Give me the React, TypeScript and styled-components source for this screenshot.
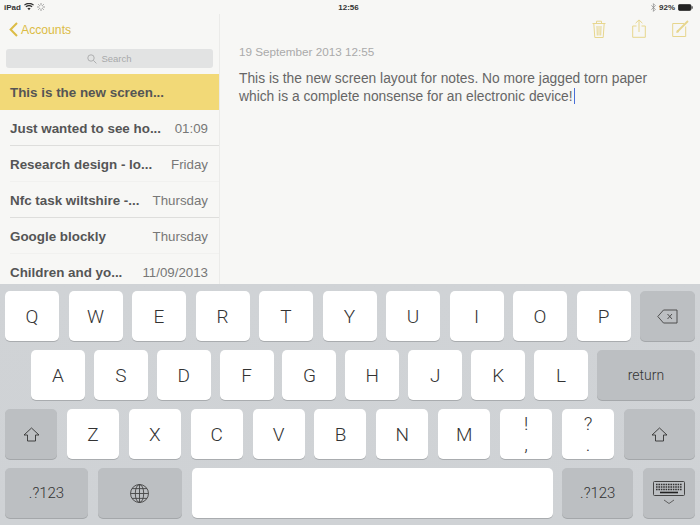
import React from "react";
import styled, { createGlobalStyle } from "styled-components";

const Global = createGlobalStyle`
  html, body { margin: 0; padding: 0; background: #f7f7f5; }
  #root { width: 700px; height: 525px; overflow: hidden; }
`;

const SANS = `"Liberation Sans", Arial, sans-serif`;
const LIGHT = `Roboto, "Liberation Sans", sans-serif`;
const YELLOW = "#dcbc45";
const ICON = "#e7d68d";

const Screen = styled.div`
  width: 700px;
  height: 525px;
  display: flex;
  flex-direction: column;
  background: #f7f7f5;
  font-family: ${SANS};
`;

const StatusBar = styled.div`
  height: 14px;
  flex: none;
  display: grid;
  grid-template-columns: 1fr auto 1fr;
  align-items: center;
  padding: 0 7px 0 4px;
  font-size: 8px;
  font-weight: 700;
  color: #333;
`;

const StatusSide = styled.div<{ $end?: boolean }>`
  display: flex;
  align-items: center;
  gap: 3px;
  justify-content: ${(p) => (p.$end ? "flex-end" : "flex-start")};
`;

const Main = styled.div`
  height: 270px;
  flex: none;
  display: flex;
  overflow: hidden;
`;

const Sidebar = styled.aside`
  width: 219px;
  flex: none;
  border-right: 1px solid #ebebe9;
  display: flex;
  flex-direction: column;
`;

const NavBar = styled.div`
  height: 35px;
  flex: none;
  display: flex;
  align-items: center;
  gap: 3px;
  padding: 0 0 4px 9px;
  box-sizing: border-box;
  font-size: 12.2px;
  color: ${YELLOW};
`;

const SearchWrap = styled.div`
  height: 25px;
  flex: none;
  padding: 0 6px;
`;

const SearchField = styled.div`
  height: 19px;
  background: #e2e3e3;
  border-radius: 3px;
  display: flex;
  align-items: center;
  justify-content: center;
  gap: 4px;
  font-size: 9.5px;
  color: #a8a9aa;
`;

const NoteRow = styled.div<{ $selected?: boolean }>`
  height: 36px;
  flex: none;
  display: flex;
  align-items: center;
  justify-content: space-between;
  box-sizing: border-box;
  padding: 0 11px 0 10px;
  background: ${(p) => (p.$selected ? "#f2d977" : "transparent")};
`;

const Divider = styled.div<{ $strong?: boolean }>`
  height: 1px;
  flex: none;
  margin: -1px 0 0 10px;
  background: ${(p) => (p.$strong ? "#dededc" : "#f1f1ef")};
`;

const NoteTitle = styled.span`
  font-size: 13.4px;
  font-weight: 700;
  color: #555;
  white-space: nowrap;
`;

const NoteDate = styled.span`
  font-size: 13.3px;
  color: #777;
  white-space: nowrap;
`;

const Detail = styled.section`
  flex: 1;
  display: flex;
  flex-direction: column;
`;

const Toolbar = styled.div`
  height: 29px;
  flex: none;
  display: flex;
  justify-content: flex-end;
  align-items: center;
  gap: 26px;
  padding: 0 11px 0 0;
`;

const NoteBody = styled.div`
  padding: 0 19px;
  margin-top: 2px;
`;

const Stamp = styled.div`
  font-size: 11.7px;
  line-height: 14px;
  color: #aaa;
`;

const NoteText = styled.p`
  margin: 11px 0 0;
  font-size: 13.8px;
  line-height: 17.5px;
  color: #666;
  white-space: pre-line;
`;

const Caret = styled.span`
  display: inline-block;
  width: 1px;
  height: 16px;
  margin-left: 1px;
  vertical-align: -3px;
  background: #4a6fd8;
`;

const Keyboard = styled.div`
  flex: 1;
  display: flex;
  flex-direction: column;
  gap: 9px;
  padding: 7px 5px 0;
  background: linear-gradient(#d0d3d6, #cfd2d5);
`;

const KeyRow = styled.div`
  display: flex;
  height: 50px;
  justify-content: space-between;
`;

const KeySpacer = styled.div`
  width: 17px;
  flex: none;
`;

const Key = styled.div<{ $w: number; $dark?: boolean; $size?: number }>`
  width: ${(p) => p.$w}px;
  flex: none;
  box-sizing: border-box;
  border-radius: 5px;
  display: flex;
  flex-direction: column;
  align-items: center;
  justify-content: center;
  background: ${(p) => (p.$dark ? "#bcbfc2" : "#ffffff")};
  box-shadow: 0 1px 0 ${(p) => (p.$dark ? "#a4a7aa" : "#a9acaf")};
  color: #333;
  font-family: ${LIGHT};
  font-weight: 300;
  font-size: ${(p) => p.$size ?? 19}px;
`;

const Punct = styled.span`
  line-height: 21px;
  font-size: 19px;
`;

const Wifi = () => (
  <svg width="10" height="8" viewBox="0 0 11 8">
    <path d="M5.5 7.6 3.7 5.5a2.8 2.8 0 0 1 3.6 0zM2.7 4.4 1.6 3.2a6 6 0 0 1 7.8 0L8.3 4.4a4.3 4.3 0 0 0-5.6 0zM.9 2.4 0 1.4a8.3 8.3 0 0 1 11 0l-.9 1a7 7 0 0 0-9.2 0z" fill="#333" />
  </svg>
);

const Spinner = () => (
  <svg width="8" height="8" viewBox="0 0 8 8" stroke="#8a8a8a" strokeWidth=".8">
    <path d="M4 0v2.4M4 5.6V8M0 4h2.4M5.6 4H8M1.2 1.2l1.6 1.6M5.2 5.2l1.6 1.6M1.2 6.8l1.6-1.6M5.2 2.8l1.6-1.6" />
  </svg>
);

const Bluetooth = () => (
  <svg width="5" height="9" viewBox="0 0 5 9" fill="none" stroke="#888" strokeWidth=".7">
    <path d="M.3 2.4 4.4 6.3 2.4 8.4V.6l2 2.1L.3 6.6" />
  </svg>
);

const Battery = () => (
  <svg width="15" height="7" viewBox="0 0 16 7">
    <rect x=".4" y=".4" width="13.4" height="6.2" rx="1.2" fill="#222" stroke="#222" strokeWidth=".8" />
    <rect x="14.3" y="2.2" width="1.4" height="2.6" fill="#444" />
  </svg>
);

const Chevron = () => (
  <svg width="9" height="15" viewBox="0 0 9 15" fill="none" stroke={YELLOW} strokeWidth="2">
    <path d="M8 1 1.6 7.5 8 14" />
  </svg>
);

const SearchIcon = () => (
  <svg width="10" height="10" viewBox="0 0 10 10" fill="none" stroke="#a8a9aa" strokeWidth=".9">
    <circle cx="4" cy="4" r="3.2" />
    <path d="m6.4 6.4 3 3" />
  </svg>
);

const Trash = () => (
  <svg width="14" height="18" viewBox="0 0 14 18" fill="none" stroke={ICON} strokeWidth="1">
    <path d="M.5 3.5h13M4.5 3.5V1.2h5v2.3M1.8 3.5l1 14h8.4l1-14M5 6l.3 9.5M7 6v9.5M9 6l-.3 9.5" />
  </svg>
);

const Share = () => (
  <svg width="14" height="19" viewBox="0 0 14 19" fill="none" stroke={ICON} strokeWidth="1">
    <path d="M4.5 7H.7v11.3h12.6V7H9.5M7 13V1M3.6 4.2 7 .9l3.4 3.3" />
  </svg>
);

const Compose = () => (
  <svg width="17" height="17" viewBox="0 0 17 17" fill="none" stroke={ICON} strokeWidth="1">
    <path d="M12 3.5H.7v13h13V6.5" />
    <path d="M5.5 11.5 16 1" strokeWidth="1.8" />
    <path d="m4.7 12.4.6-2 1.4 1.4z" fill={ICON} />
  </svg>
);

const Backspace = () => (
  <svg width="21" height="15" viewBox="0 0 21 15" fill="none" stroke="#444" strokeWidth=".9">
    <path d="M6.5 1H20v13H6.5L.8 7.5z" />
    <path d="m10.5 5 4.5 5M15 5l-4.5 5" />
  </svg>
);

const ShiftIcon = () => (
  <svg width="17" height="15" viewBox="0 0 17 15" fill="none" stroke="#333" strokeWidth=".9">
    <path d="M8.5 1 16 8h-3.5v6h-8V8H1z" />
  </svg>
);

const Globe = () => (
  <svg width="19" height="19" viewBox="0 0 19 19" fill="none" stroke="#444" strokeWidth=".9">
    <circle cx="9.5" cy="9.5" r="9" />
    <ellipse cx="9.5" cy="9.5" rx="4.2" ry="9" />
    <path d="M9.5.5v18M.5 9.5h18M2 4.6h15M2 14.4h15" />
  </svg>
);

const KeyboardIcon = () => (
  <svg width="32" height="24" viewBox="0 0 32 24" fill="none">
    <rect x=".5" y=".5" width="31" height="14" rx="1" stroke="#444" />
    <path d="M3 3.5h26M3 6h26M3 8.5h26" stroke="#333" strokeWidth="1.5" strokeDasharray="1.6 .8" />
    <path d="M7 11.5h18" stroke="#222" strokeWidth="1.6" />
    <path d="m11 19 5 3.5 5-3.5" stroke="#555" strokeWidth=".9" />
  </svg>
);

const notes = [
  { title: "Just wanted to see ho...", date: "01:09", strong: true },
  { title: "Research design - lo...", date: "Friday", strong: false },
  { title: "Nfc task wiltshire -...", date: "Thursday", strong: true },
  { title: "Google blockly", date: "Thursday", strong: false },
  { title: "Children and yo...", date: "11/09/2013", strong: false },
];

const row1 = ["Q", "W", "E", "R", "T", "Y", "U", "I", "O", "P"];
const row2 = ["A", "S", "D", "F", "G", "H", "J", "K", "L"];
const row3 = ["Z", "X", "C", "V", "B", "N", "M"];

export default function App() {
  return (
    <Screen>
      <Global />
      <StatusBar>
        <StatusSide>
          iPad <Wifi /> <Spinner />
        </StatusSide>
        <span>12:56</span>
        <StatusSide $end>
          <Bluetooth /> 92% <Battery />
        </StatusSide>
      </StatusBar>
      <Main>
        <Sidebar>
          <NavBar>
            <Chevron />
            Accounts
          </NavBar>
          <SearchWrap>
            <SearchField>
              <SearchIcon />
              Search
            </SearchField>
          </SearchWrap>
          <NoteRow $selected>
            <NoteTitle>This is the new screen...</NoteTitle>
          </NoteRow>
          {notes.map((n) => (
            <React.Fragment key={n.title}>
              <NoteRow>
                <NoteTitle>{n.title}</NoteTitle>
                <NoteDate>{n.date}</NoteDate>
              </NoteRow>
              <Divider $strong={n.strong} />
            </React.Fragment>
          ))}
        </Sidebar>
        <Detail>
          <Toolbar>
            <Trash />
            <Share />
            <Compose />
          </Toolbar>
          <NoteBody>
            <Stamp>19 September 2013 12:55</Stamp>
            <NoteText>
              {"This is the new screen layout for notes. No more jagged torn paper\nwhich is a complete nonsense for an electronic device!"}
              <Caret />
            </NoteText>
          </NoteBody>
        </Detail>
      </Main>
      <Keyboard>
        <KeyRow>
          {row1.map((k) => (
            <Key key={k} $w={54}>{k}</Key>
          ))}
          <Key $w={55} $dark><Backspace /></Key>
        </KeyRow>
        <KeyRow>
          <KeySpacer />
          {row2.map((k) => (
            <Key key={k} $w={54}>{k}</Key>
          ))}
          <Key $w={98} $dark $size={14}>return</Key>
        </KeyRow>
        <KeyRow>
          <Key $w={52} $dark><ShiftIcon /></Key>
          {row3.map((k) => (
            <Key key={k} $w={52}>{k}</Key>
          ))}
          <Key $w={52}><Punct>!</Punct><Punct>,</Punct></Key>
          <Key $w={52}><Punct>?</Punct><Punct>.</Punct></Key>
          <Key $w={71} $dark><ShiftIcon /></Key>
        </KeyRow>
        <KeyRow>
          <Key $w={83} $dark $size={15}>.?123</Key>
          <Key $w={84} $dark><Globe /></Key>
          <Key $w={361} />
          <Key $w={71} $dark $size={15}>.?123</Key>
          <Key $w={52} $dark><KeyboardIcon /></Key>
        </KeyRow>
      </Keyboard>
    </Screen>
  );
}
